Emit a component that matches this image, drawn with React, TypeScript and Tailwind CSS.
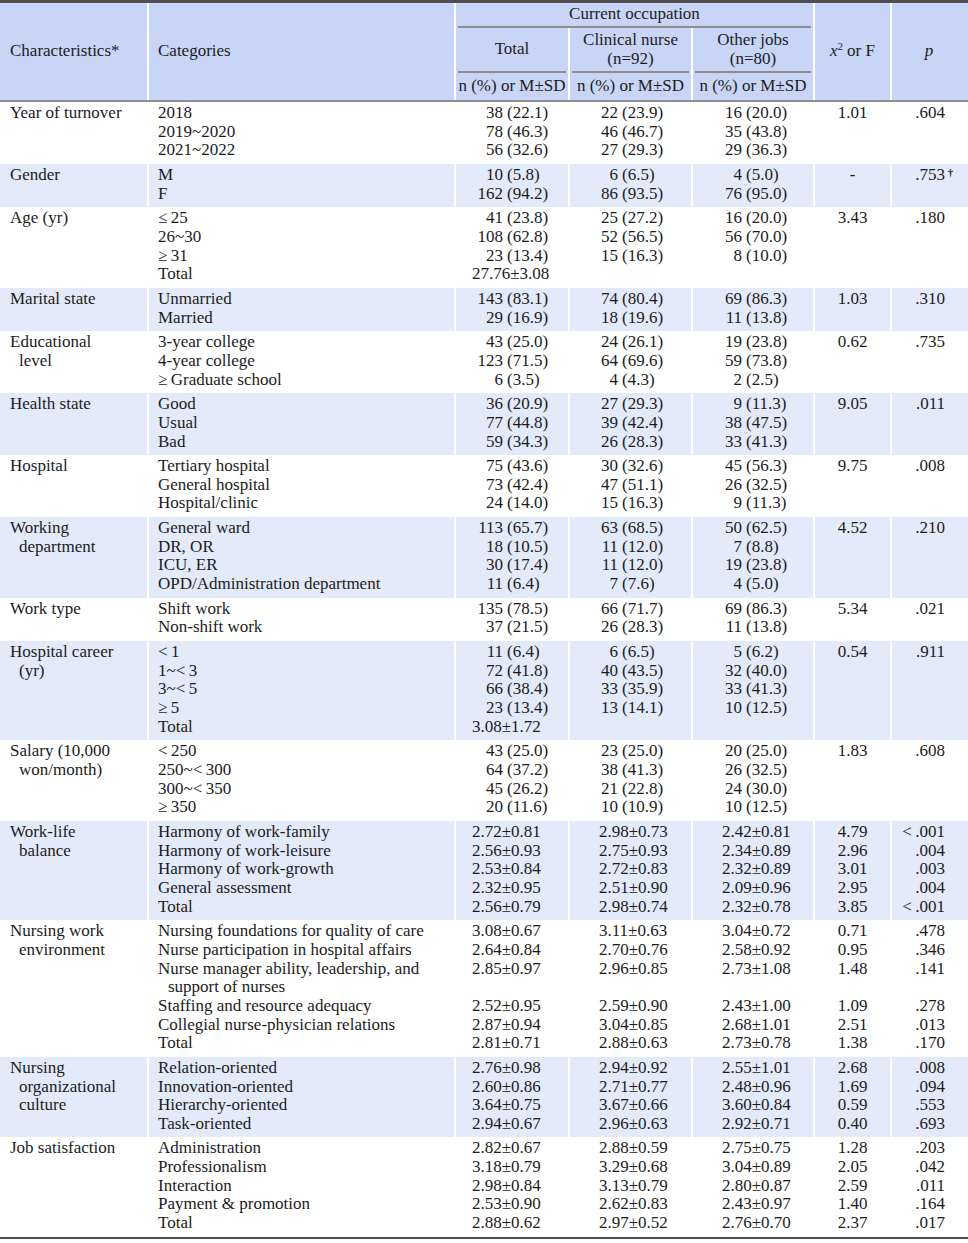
import React from "react";

type Line = {
    cat?: string;
    sub?: boolean;
    t?: string;
    c?: string;
    o?: string;
    x?: string;
    p?: string;
    dag?: boolean;
};

type Group = { label: string[]; lines: Line[] };

const COLS = "grid grid-cols-[149px_307px_114px_123px_122px_77px_76px]";
const TS = "\u2009"; // thin space after the comparison signs

const groups: Group[] = [
    {
        label: ["Year of turnover"],
        lines: [
            { cat: "2018", t: "38 (22.1)", c: "22 (23.9)", o: "16 (20.0)", x: "1.01", p: ".604" },
            { cat: "2019~2020", t: "78 (46.3)", c: "46 (46.7)", o: "35 (43.8)" },
            { cat: "2021~2022", t: "56 (32.6)", c: "27 (29.3)", o: "29 (36.3)" },
        ],
    },
    {
        label: ["Gender"],
        lines: [
            { cat: "M", t: "10 (5.8)", c: "6 (6.5)", o: "4 (5.0)", x: "-", p: ".753", dag: true },
            { cat: "F", t: "162 (94.2)", c: "86 (93.5)", o: "76 (95.0)" },
        ],
    },
    {
        label: ["Age (yr)"],
        lines: [
            { cat: `≤${TS}25`, t: "41 (23.8)", c: "25 (27.2)", o: "16 (20.0)", x: "3.43", p: ".180" },
            { cat: "26~30", t: "108 (62.8)", c: "52 (56.5)", o: "56 (70.0)" },
            { cat: `≥${TS}31`, t: "23 (13.4)", c: "15 (16.3)", o: "8 (10.0)" },
            { cat: "Total", t: "27.76±3.08" },
        ],
    },
    {
        label: ["Marital state"],
        lines: [
            { cat: "Unmarried", t: "143 (83.1)", c: "74 (80.4)", o: "69 (86.3)", x: "1.03", p: ".310" },
            { cat: "Married", t: "29 (16.9)", c: "18 (19.6)", o: "11 (13.8)" },
        ],
    },
    {
        label: ["Educational", "level"],
        lines: [
            { cat: "3-year college", t: "43 (25.0)", c: "24 (26.1)", o: "19 (23.8)", x: "0.62", p: ".735" },
            { cat: "4-year college", t: "123 (71.5)", c: "64 (69.6)", o: "59 (73.8)" },
            { cat: `≥${TS}Graduate school`, t: "6 (3.5)", c: "4 (4.3)", o: "2 (2.5)" },
        ],
    },
    {
        label: ["Health state"],
        lines: [
            { cat: "Good", t: "36 (20.9)", c: "27 (29.3)", o: "9 (11.3)", x: "9.05", p: ".011" },
            { cat: "Usual", t: "77 (44.8)", c: "39 (42.4)", o: "38 (47.5)" },
            { cat: "Bad", t: "59 (34.3)", c: "26 (28.3)", o: "33 (41.3)" },
        ],
    },
    {
        label: ["Hospital"],
        lines: [
            { cat: "Tertiary hospital", t: "75 (43.6)", c: "30 (32.6)", o: "45 (56.3)", x: "9.75", p: ".008" },
            { cat: "General hospital", t: "73 (42.4)", c: "47 (51.1)", o: "26 (32.5)" },
            { cat: "Hospital/clinic", t: "24 (14.0)", c: "15 (16.3)", o: "9 (11.3)" },
        ],
    },
    {
        label: ["Working", "department"],
        lines: [
            { cat: "General ward", t: "113 (65.7)", c: "63 (68.5)", o: "50 (62.5)", x: "4.52", p: ".210" },
            { cat: "DR, OR", t: "18 (10.5)", c: "11 (12.0)", o: "7 (8.8)" },
            { cat: "ICU, ER", t: "30 (17.4)", c: "11 (12.0)", o: "19 (23.8)" },
            { cat: "OPD/Administration department", t: "11 (6.4)", c: "7 (7.6)", o: "4 (5.0)" },
        ],
    },
    {
        label: ["Work type"],
        lines: [
            { cat: "Shift work", t: "135 (78.5)", c: "66 (71.7)", o: "69 (86.3)", x: "5.34", p: ".021" },
            { cat: "Non-shift work", t: "37 (21.5)", c: "26 (28.3)", o: "11 (13.8)" },
        ],
    },
    {
        label: ["Hospital career", "(yr)"],
        lines: [
            { cat: `<${TS}1`, t: "11 (6.4)", c: "6 (6.5)", o: "5 (6.2)", x: "0.54", p: ".911" },
            { cat: `1~<${TS}3`, t: "72 (41.8)", c: "40 (43.5)", o: "32 (40.0)" },
            { cat: `3~<${TS}5`, t: "66 (38.4)", c: "33 (35.9)", o: "33 (41.3)" },
            { cat: `≥${TS}5`, t: "23 (13.4)", c: "13 (14.1)", o: "10 (12.5)" },
            { cat: "Total", t: "3.08±1.72" },
        ],
    },
    {
        label: ["Salary (10,000", "won/month)"],
        lines: [
            { cat: `<${TS}250`, t: "43 (25.0)", c: "23 (25.0)", o: "20 (25.0)", x: "1.83", p: ".608" },
            { cat: `250~<${TS}300`, t: "64 (37.2)", c: "38 (41.3)", o: "26 (32.5)" },
            { cat: `300~<${TS}350`, t: "45 (26.2)", c: "21 (22.8)", o: "24 (30.0)" },
            { cat: `≥${TS}350`, t: "20 (11.6)", c: "10 (10.9)", o: "10 (12.5)" },
        ],
    },
    {
        label: ["Work-life", "balance"],
        lines: [
            { cat: "Harmony of work-family", t: "2.72±0.81", c: "2.98±0.73", o: "2.42±0.81", x: "4.79", p: `<${TS}.001` },
            { cat: "Harmony of work-leisure", t: "2.56±0.93", c: "2.75±0.93", o: "2.34±0.89", x: "2.96", p: ".004" },
            { cat: "Harmony of work-growth", t: "2.53±0.84", c: "2.72±0.83", o: "2.32±0.89", x: "3.01", p: ".003" },
            { cat: "General assessment", t: "2.32±0.95", c: "2.51±0.90", o: "2.09±0.96", x: "2.95", p: ".004" },
            { cat: "Total", t: "2.56±0.79", c: "2.98±0.74", o: "2.32±0.78", x: "3.85", p: `<${TS}.001` },
        ],
    },
    {
        label: ["Nursing work", "environment"],
        lines: [
            { cat: "Nursing foundations for quality of care", t: "3.08±0.67", c: "3.11±0.63", o: "3.04±0.72", x: "0.71", p: ".478" },
            { cat: "Nurse participation in hospital affairs", t: "2.64±0.84", c: "2.70±0.76", o: "2.58±0.92", x: "0.95", p: ".346" },
            { cat: "Nurse manager ability, leadership, and", t: "2.85±0.97", c: "2.96±0.85", o: "2.73±1.08", x: "1.48", p: ".141" },
            { cat: "support of nurses", sub: true },
            { cat: "Staffing and resource adequacy", t: "2.52±0.95", c: "2.59±0.90", o: "2.43±1.00", x: "1.09", p: ".278" },
            { cat: "Collegial nurse-physician relations", t: "2.87±0.94", c: "3.04±0.85", o: "2.68±1.01", x: "2.51", p: ".013" },
            { cat: "Total", t: "2.81±0.71", c: "2.88±0.63", o: "2.73±0.78", x: "1.38", p: ".170" },
        ],
    },
    {
        label: ["Nursing", "organizational", "culture"],
        lines: [
            { cat: "Relation-oriented", t: "2.76±0.98", c: "2.94±0.92", o: "2.55±1.01", x: "2.68", p: ".008" },
            { cat: "Innovation-oriented", t: "2.60±0.86", c: "2.71±0.77", o: "2.48±0.96", x: "1.69", p: ".094" },
            { cat: "Hierarchy-oriented", t: "3.64±0.75", c: "3.67±0.66", o: "3.60±0.84", x: "0.59", p: ".553" },
            { cat: "Task-oriented", t: "2.94±0.67", c: "2.96±0.63", o: "2.92±0.71", x: "0.40", p: ".693" },
        ],
    },
    {
        label: ["Job satisfaction"],
        lines: [
            { cat: "Administration", t: "2.82±0.67", c: "2.88±0.59", o: "2.75±0.75", x: "1.28", p: ".203" },
            { cat: "Professionalism", t: "3.18±0.79", c: "3.29±0.68", o: "3.04±0.89", x: "2.05", p: ".042" },
            { cat: "Interaction", t: "2.98±0.84", c: "3.13±0.79", o: "2.80±0.87", x: "2.59", p: ".011" },
            { cat: "Payment & promotion", t: "2.53±0.90", c: "2.62±0.83", o: "2.43±0.97", x: "1.40", p: ".164" },
            { cat: "Total", t: "2.88±0.62", c: "2.97±0.52", o: "2.76±0.70", x: "2.37", p: ".017" },
        ],
    },
];

const cell = "border-r-2 border-white pt-[2px] pb-[4px]";

function NumCol({ vals, numW, msd }: { vals: (string | undefined)[]; numW: string; msd: string }) {
    return (
        <div className={cell}>
            {vals.map((v, i) => {
                const m = v?.match(/^(\d+) (\(.+\))$/);
                if (m) {
                    return (
                        <div key={i} className="flex whitespace-nowrap">
                            <span className={`${numW} shrink-0 text-right`}>{m[1]}</span>
                            <span className="pl-[4px]">{m[2]}</span>
                        </div>
                    );
                }
                return (
                    <div key={i} className={`${msd} whitespace-nowrap`}>
                        {v ?? "\u00a0"}
                    </div>
                );
            })}
        </div>
    );
}

function HeadSub({ children }: { children: React.ReactNode }) {
    // header cell of the middle row, with its own short rule underneath
    return (
        <div className="flex flex-col border-r-2 border-white">
            <div className="flex flex-1 flex-col items-center justify-center">{children}</div>
            <div className="mx-[2px] h-[2px] bg-[#8e8e8e]" />
        </div>
    );
}

export default function App() {
    return (
        <div
            className="w-[968px] bg-white text-[17px] leading-[18.65px] text-[#1c1c1c]"
            style={{ fontFamily: '"Liberation Serif", "Times New Roman", serif' }}
        >
            {/* Header */}
            <div className="border-t-[3px] border-[#4f4f4f]">
                <div className={`${COLS} grid-rows-[25px_45px_27px] border-b-2 border-[#8e8e8e] bg-[#c9d5f6]`}>
                    <div className="row-span-3 flex items-center border-r-2 border-white pl-[10px]">Characteristics*</div>
                    <div className="row-span-3 flex items-center border-r-2 border-white pl-[9px]">Categories</div>
                    <div className="col-span-3 flex flex-col border-r-2 border-white">
                        <div className="flex flex-1 items-center justify-center">Current occupation</div>
                        <div className="mx-[2px] h-[2px] bg-[#8e8e8e]" />
                    </div>
                    <div className="row-span-3 flex items-center justify-center border-r-2 border-white">
                        <span className="italic">x</span>
                        <sup className="text-[11px]">2</sup>
                        <span className="pl-[4px]">or F</span>
                    </div>
                    <div className="row-span-3 flex items-center justify-center pr-[2px] italic">p</div>
                    <HeadSub>Total</HeadSub>
                    <HeadSub>
                        <div>Clinical nurse</div>
                        <div>(n=92)</div>
                    </HeadSub>
                    <HeadSub>
                        <div>Other jobs</div>
                        <div>(n=80)</div>
                    </HeadSub>
                    <div className="flex items-center justify-center whitespace-nowrap border-r-2 border-white">n (%) or M±SD</div>
                    <div className="flex items-center justify-center whitespace-nowrap border-r-2 border-white">n (%) or M±SD</div>
                    <div className="flex items-center justify-center whitespace-nowrap border-r-2 border-white">n (%) or M±SD</div>
                </div>
            </div>

            {/* Body */}
            <div className="border-b-2 border-[#4f4f4f]">
                {groups.map((g, gi) => (
                    <div key={gi} className={`${COLS} ${gi % 2 === 1 ? "bg-[#e3eafa]" : "bg-white"}`}>
                        <div className={`${cell} pl-[10px]`}>
                            {g.label.map((l, i) => (
                                <div key={i} className={i > 0 ? "pl-[9px]" : ""}>
                                    {l}
                                </div>
                            ))}
                        </div>
                        <div className={`${cell} pl-[9px]`}>
                            {g.lines.map((l, i) => (
                                <div key={i} className={`whitespace-nowrap ${l.sub ? "pl-[10px]" : ""}`}>
                                    {l.cat}
                                </div>
                            ))}
                        </div>
                        <NumCol vals={g.lines.map((l) => l.t)} numW="w-[47px]" msd="pl-[16px]" />
                        <NumCol vals={g.lines.map((l) => l.c)} numW="w-[48px]" msd="pl-[29px]" />
                        <NumCol vals={g.lines.map((l) => l.o)} numW="w-[49px]" msd="pl-[29px]" />
                        <div className={`${cell} text-center`}>
                            {g.lines.map((l, i) => (
                                <div key={i}>{l.x ?? "\u00a0"}</div>
                            ))}
                        </div>
                        <div className="pt-[2px] pb-[4px] pr-[23px] text-right">
                            {g.lines.map((l, i) => (
                                <div key={i} className="whitespace-nowrap">
                                    {l.p ?? "\u00a0"}
                                    {l.dag && (
                                        <span className="inline-block w-0 overflow-visible align-top text-[11px] font-bold leading-[12px]">
                                            &nbsp;†
                                        </span>
                                    )}
                                </div>
                            ))}
                        </div>
                    </div>
                ))}
            </div>
        </div>
    );
}
